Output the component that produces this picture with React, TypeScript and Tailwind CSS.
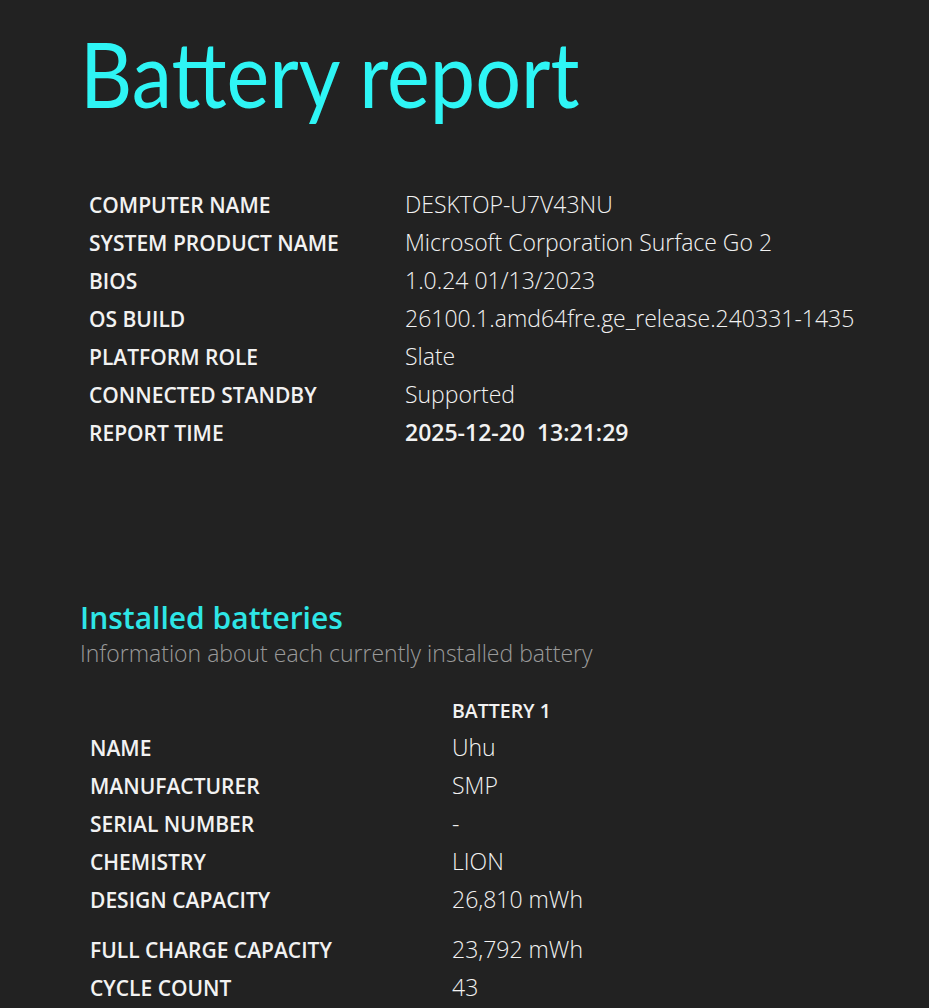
import React from "react";

const info: [string, string, boolean?][] = [
  ["COMPUTER NAME", "DESKTOP-U7V43NU"],
  ["SYSTEM PRODUCT NAME", "Microsoft Corporation Surface Go 2"],
  ["BIOS", "1.0.24 01/13/2023"],
  ["OS BUILD", "26100.1.amd64fre.ge_release.240331-1435"],
  ["PLATFORM ROLE", "Slate"],
  ["CONNECTED STANDBY", "Supported"],
  ["REPORT TIME", "2025-12-20\u00a0\u00a013:21:29", true],
];

const battery: [string, string, string][] = [
  ["NAME", "Uhu", "h-[38px]"],
  ["MANUFACTURER", "SMP", "h-[38px]"],
  ["SERIAL NUMBER", "-", "h-[38px]"],
  ["CHEMISTRY", "LION", "h-[38px]"],
  ["DESIGN CAPACITY", "26,810 mWh", "h-[38px]"],
  ["FULL CHARGE CAPACITY", "23,792 mWh", "h-[38px] mt-[12px]"],
  ["CYCLE COUNT", "43", "h-[38px]"],
];

export default function App() {
  return (
    <div
      className="min-h-[1008px] w-full bg-[#222222] text-[#f2f2f2] overflow-hidden"
      style={{ fontFamily: '"Open Sans", "Noto Sans", sans-serif' }}
    >
      <div className="pl-[80px] pt-[18px]">
        <h1
          className="text-[92px] leading-[110px] font-normal text-[#2ef5f5] origin-left scale-x-[0.88]"
          style={{ fontFamily: 'Lato, "Open Sans", sans-serif' }}
        >
          Battery report
        </h1>
        <div className="mt-[58px] ml-[9px] flex flex-col">
          {info.map(([k, v, b]) => (
            <div key={k} className="flex h-[38px] items-center">
              <div className="w-[316px] text-[21px] font-semibold translate-y-[1px]">{k}</div>
              <div className={`text-[23px] -translate-y-[1px] ${b ? "font-semibold" : "font-light"}`}>{v}</div>
            </div>
          ))}
        </div>
        <div className="mt-[147px]">
          <h2 className="text-[30px] leading-[38px] font-semibold text-[#2ee6e6]">
            Installed batteries
          </h2>
          <p className="text-[23px] leading-[32px] font-light text-[#9a9a9a]">
            Information about each currently installed battery
          </p>
        </div>
        <div className="mt-[24px] ml-[10px] flex flex-col">
          <div className="flex h-[36px] items-center">
            <div className="w-[362px]" />
            <div className="text-[19.5px] font-semibold">BATTERY 1</div>
          </div>
          {battery.map(([k, v, c]) => (
            <div key={k} className={`flex items-center ${c}`}>
              <div className="w-[362px] text-[21px] font-semibold translate-y-[1px]">{k}</div>
              <div className="text-[23px] font-light -translate-y-[1px]">{v}</div>
            </div>
          ))}
        </div>
      </div>
    </div>
  );
}
